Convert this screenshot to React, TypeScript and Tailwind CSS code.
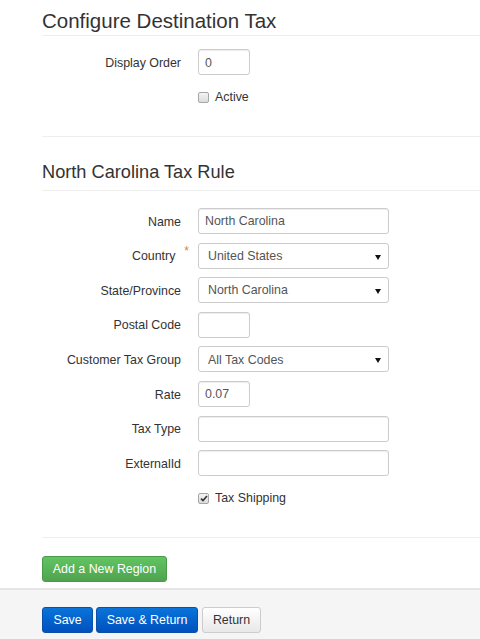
import React from "react";

const font = { fontFamily: "'Liberation Sans', Arial, sans-serif" };

function Label({ text, required }: { text: string; required?: boolean }) {
  return (
    <div className="flex w-[139px] shrink-0 items-start justify-end pt-[2px] text-[12.4px] text-[#333]">
      {text}
      {required && (
        <span className="ml-[9px] mr-[-8px] mt-[-3px] text-[12px] leading-[14px] text-[#c7894a]">*</span>
      )}
    </div>
  );
}

function TextInput({ value, wide }: { value?: string; wide?: boolean }) {
  return (
    <input
      readOnly
      value={value ?? ""}
      className={`h-[26px] ${wide ? "w-[191px]" : "w-[52px]"} rounded-[3px] border border-[#ccc] bg-white px-[6px] pt-[1px] text-[12.4px] text-[#555] shadow-[inset_0_1px_1px_rgba(0,0,0,0.075)] outline-none`}
      style={font}
    />
  );
}

function Select({ value }: { value: string }) {
  return (
    <div className="relative flex h-[26px] w-[191px] items-center rounded-[3px] border border-[#ccc] bg-white pl-[9px] pt-[1px] text-[12.4px] text-[#555]">
      {value}
      <svg className="absolute right-[7px] top-[11px]" width="6" height="5" viewBox="0 0 6 5">
        <path d="M0 0h6L3 5z" fill="#111" />
      </svg>
    </div>
  );
}

function Checkbox({ checked, text }: { checked?: boolean; text: string }) {
  return (
    <div className="flex items-center gap-[6px] pt-[2px] text-[12.4px] text-[#333]">
      <span className="flex h-[11px] w-[11px] items-center justify-center rounded-[2px] border border-[#a6a6a6] bg-gradient-to-b from-[#f4f4f4] to-[#dcdcdc]">
        {checked && (
          <svg width="8" height="7" viewBox="0 0 8 7">
            <path d="M1 3.6l2 2L7 1" fill="none" stroke="#333" strokeWidth="1.6" />
          </svg>
        )}
      </span>
      {text}
    </div>
  );
}

function Row({ children }: { children: React.ReactNode }) {
  return <div className="flex h-[26px] items-center gap-[17px]">{children}</div>;
}

export default function App() {
  return (
    <div className="min-h-[639px] w-full bg-white" style={font}>
      <div className="pl-[42px]">
        <h1 className="border-b border-[#eee] pb-[2px] pt-[9px] text-[20.5px] leading-[24px] text-[#333]">
          Configure Destination Tax
        </h1>

        <div className="mt-[13px] flex flex-col gap-[8.6px] border-b border-[#eee] pb-[26.4px]">
          <Row>
            <Label text="Display Order" />
            <TextInput value="0" />
          </Row>
          <Row>
            <div className="w-[139px] shrink-0" />
            <Checkbox text="Active" />
          </Row>
        </div>

        <h2 className="mt-[23.7px] border-b border-[#eee] pb-[7.3px] text-[18.2px] leading-[22px] text-[#333]">
          North Carolina Tax Rule
        </h2>

        <div className="mt-[17px] flex flex-col gap-[8.6px] border-b border-[#eee] pb-[26.4px]">
          <Row>
            <Label text="Name" />
            <TextInput value="North Carolina" wide />
          </Row>
          <Row>
            <Label text="Country" required />
            <Select value="United States" />
          </Row>
          <Row>
            <Label text="State/Province" />
            <Select value="North Carolina" />
          </Row>
          <Row>
            <Label text="Postal Code" />
            <TextInput />
          </Row>
          <Row>
            <Label text="Customer Tax Group" />
            <Select value="All Tax Codes" />
          </Row>
          <Row>
            <Label text="Rate" />
            <TextInput value="0.07" />
          </Row>
          <Row>
            <Label text="Tax Type" />
            <TextInput wide />
          </Row>
          <Row>
            <Label text="ExternalId" />
            <TextInput wide />
          </Row>
          <Row>
            <div className="w-[139px] shrink-0" />
            <Checkbox checked text="Tax Shipping" />
          </Row>
        </div>

        <button className="mt-[18px] h-[26px] w-[125px] rounded-[3px] border border-[#4a9a4a] bg-gradient-to-b from-[#62c462] to-[#4fa34f] pt-[1px] text-[12.4px] text-white">
          Add a New Region
        </button>
      </div>

      <div className="mt-[6px] min-h-[51px] border-t-2 border-[#e5e5e5] bg-[#f5f5f5] pl-[42px] pt-[17px]">
        <div className="flex gap-[3px]">
          <button className="h-[26px] w-[51px] rounded-[3px] border border-[#0a4fa8] bg-gradient-to-b from-[#0a74db] to-[#0250bd] pt-[1px] text-[12.4px] text-white">
            Save
          </button>
          <button className="h-[26px] w-[102px] rounded-[3px] border border-[#0a4fa8] bg-gradient-to-b from-[#0a74db] to-[#0250bd] pt-[1px] text-[12.4px] text-white">
            Save &amp; Return
          </button>
          <button className="ml-[1px] h-[26px] w-[59px] rounded-[3px] border border-[#ccc] bg-gradient-to-b from-white to-[#e8e8e8] pt-[1px] text-[12.4px] text-[#333]">
            Return
          </button>
        </div>
      </div>
    </div>
  );
}
